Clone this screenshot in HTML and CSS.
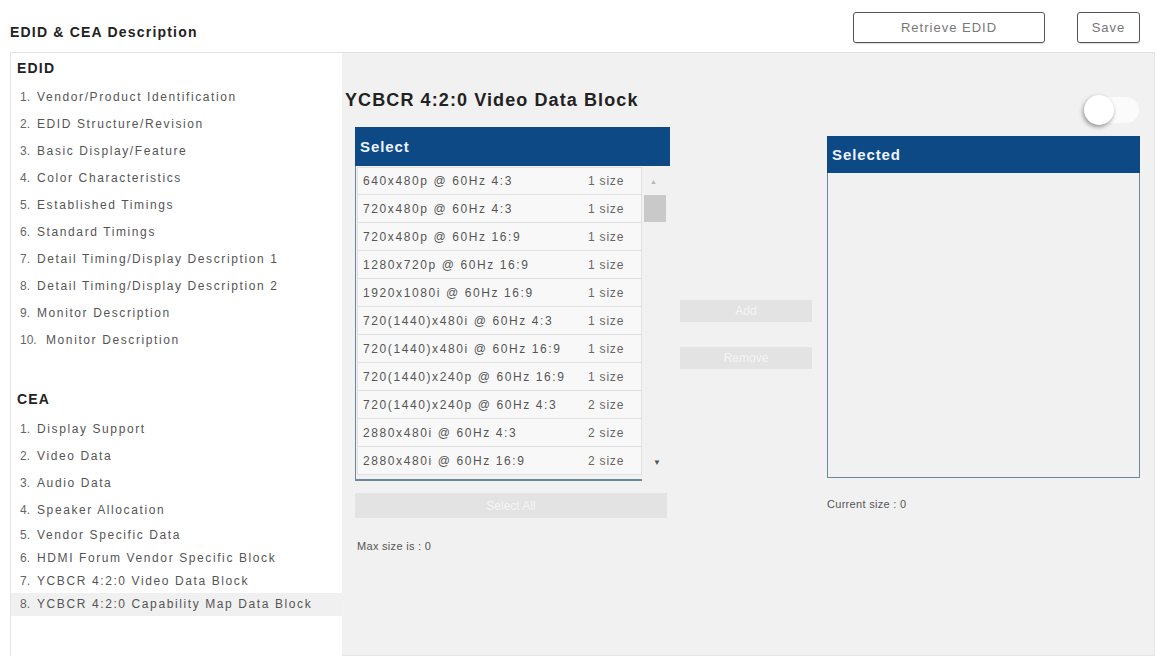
FILE: index.html
```html
<!DOCTYPE html>
<html lang="en">
<head>
  <meta charset="UTF-8" />
  <meta name="viewport" content="width=device-width, initial-scale=1.0"/>
  <title>EDID &amp; CEA Description</title>
  <link rel="stylesheet" href="styles.css">
</head>
<body>
  <div class="topbar">
    <div class="page-title">EDID &amp; CEA Description</div>
    <div class="top-actions">
      <button type="button" class="btn btn-retrieve">Retrieve EDID</button>
      <button type="button" class="btn btn-save">Save</button>
    </div>
  </div>

  <div class="content">
    <!-- block navigation -->
    <div class="sidebar">
      <div class="nav-title">EDID</div>
      <ul class="nav-list">
        <li><span class="num">1.</span>Vendor/Product Identification</li>
        <li><span class="num">2.</span>EDID Structure/Revision</li>
        <li><span class="num">3.</span>Basic Display/Feature</li>
        <li><span class="num">4.</span>Color Characteristics</li>
        <li><span class="num">5.</span>Established Timings</li>
        <li><span class="num">6.</span>Standard Timings</li>
        <li><span class="num">7.</span>Detail Timing/Display Description 1</li>
        <li><span class="num">8.</span>Detail Timing/Display Description 2</li>
        <li><span class="num">9.</span>Monitor Description</li>
        <li><span class="num wide">10.</span>Monitor Description</li>
      </ul>

      <div class="nav-title cea">CEA</div>
      <ul class="nav-list">
        <li><span class="num">1.</span>Display Support</li>
        <li><span class="num">2.</span>Video Data</li>
        <li><span class="num">3.</span>Audio Data</li>
        <li><span class="num">4.</span>Speaker Allocation</li>
        <li class="tight"><span class="num">5.</span>Vendor Specific Data</li>
        <li class="tight"><span class="num">6.</span>HDMI Forum Vendor Specific Block</li>
        <li class="tight"><span class="num">7.</span>YCBCR 4:2:0 Video Data Block</li>
        <li class="tight active"><span class="num">8.</span>YCBCR 4:2:0 Capability Map Data Block</li>
      </ul>
    </div>

    <div class="main">
      <div class="block-head">
        <h2>YCBCR 4:2:0 Video Data Block</h2>
        <div class="toggle"><span class="knob"></span></div>
      </div>

      <div class="picker">
        <div class="col-select">
          <div class="panel-head">Select</div>
          <div class="list-wrap">
            <div class="list">
              <div class="row"><span>640x480p @ 60Hz 4:3</span><span class="size">1 size</span></div>
              <div class="row"><span>720x480p @ 60Hz 4:3</span><span class="size">1 size</span></div>
              <div class="row"><span>720x480p @ 60Hz 16:9</span><span class="size">1 size</span></div>
              <div class="row"><span>1280x720p @ 60Hz 16:9</span><span class="size">1 size</span></div>
              <div class="row"><span>1920x1080i @ 60Hz 16:9</span><span class="size">1 size</span></div>
              <div class="row"><span>720(1440)x480i @ 60Hz 4:3</span><span class="size">1 size</span></div>
              <div class="row"><span>720(1440)x480i @ 60Hz 16:9</span><span class="size">1 size</span></div>
              <div class="row"><span>720(1440)x240p @ 60Hz 16:9</span><span class="size">1 size</span></div>
              <div class="row"><span>720(1440)x240p @ 60Hz 4:3</span><span class="size">2 size</span></div>
              <div class="row"><span>2880x480i @ 60Hz 4:3</span><span class="size">2 size</span></div>
              <div class="row"><span>2880x480i @ 60Hz 16:9</span><span class="size">2 size</span></div>
            </div>
            <div class="scrollbar">
              <span class="arrow up">&#9650;</span>
              <span class="thumb"></span>
              <span class="arrow down">&#9660;</span>
            </div>
          </div>
          <button type="button" class="btn-flat btn-all">Select All</button>
          <div class="note">Max size is : 0</div>
        </div>

        <div class="col-actions">
          <button type="button" class="btn-flat btn-add">Add</button>
          <button type="button" class="btn-flat btn-remove">Remove</button>
        </div>

        <div class="col-selected">
          <div class="panel-head">Selected</div>
          <div class="selected-body"></div>
          <div class="note note-current">Current size : 0</div>
        </div>
      </div>
    </div>
  </div>
</body>
</html>
```

FILE: styles.css
```css
body {
  margin: 0;
  font-family: "Liberation Sans", Arial, sans-serif;
  background: #fff;
  color: #333;
}
.topbar {
  height: 52px;
  display: flex;
  align-items: center;
  justify-content: space-between;
  padding: 0 20px 0 10px;
}
.page-title {
  font-size: 14px;
  font-weight: bold;
  letter-spacing: 1.2px;
  color: #222;
  margin-top: 12px;
}
.top-actions {
  display: flex;
  gap: 32px;
  margin-top: 2px;
}
.btn {
  height: 31px;
  background: #fff;
  border: 1px solid #555;
  border-radius: 3px;
  color: #777;
  font-family: inherit;
  font-size: 13px;
  letter-spacing: 1px;
  box-shadow: 0 1px 1px rgba(0,0,0,0.15);
  cursor: pointer;
}
.btn-retrieve {
  width: 192px;
}
.btn-save {
  width: 63px;
}
.content {
  display: flex;
  height: 603px;
  margin: 0 5px 0 10px;
  border-top: 1px solid #e2e2e2;
}

/* left navigation */
.sidebar {
  width: 331px;
  background: #fff;
  border-left: 1px solid #e4e4e4;
  padding-top: 7px;
}
.nav-title {
  font-size: 14px;
  font-weight: bold;
  letter-spacing: 1.2px;
  color: #222;
  line-height: 16px;
  padding-left: 6px;
  margin-bottom: 8px;
}
.nav-title.cea {
  margin-top: 37px;
  margin-bottom: 9px;
}
.nav-list {
  list-style: none;
  margin: 0;
  padding: 0;
}
.nav-list li {
  font-size: 12px;
  letter-spacing: 1.6px;
  color: #555;
  line-height: 27px;
  height: 27px;
  padding-left: 9px;
  display: flex;
  white-space: nowrap;
}
.nav-list li.tight {
  height: 23px;
  line-height: 23px;
}
.nav-list li.active {
  background: #f0f0f0;
}
.num {
  width: 17px;
  color: #666;
  letter-spacing: 0;
}
.num.wide {
  width: 26px;
}

/* block editor */
.main {
  flex: 1;
  background: #f1f1f1;
  border-right: 1px solid #e6e6e6;
  border-bottom: 1px solid #e6e6e6;
  padding-top: 37px;
}
.block-head {
  display: flex;
  justify-content: space-between;
  align-items: flex-start;
  height: 30px;
  margin: 0 15px 7px 3px;
}
.block-head h2 {
  margin: 0;
  font-size: 18px;
  letter-spacing: 1.1px;
  line-height: 20px;
  color: #222;
}
.toggle {
  position: relative;
  width: 50px;
  height: 26px;
  margin-top: 7px;
  border-radius: 13px;
  background: #fbfbfb;
}
.knob {
  position: absolute;
  left: -5px;
  top: -2px;
  width: 30px;
  height: 30px;
  border-radius: 50%;
  background: #fff;
  box-shadow: -1px 2px 4px rgba(0,0,0,0.4);
}
.picker {
  display: flex;
  padding-left: 13px;
}
.panel-head {
  background: #0d4a85;
  color: #eef3fb;
  font-size: 15px;
  font-weight: bold;
  letter-spacing: 0.9px;
  padding-left: 5px;
}
.col-select {
  width: 315px;
}
.col-select .panel-head {
  height: 39px;
  line-height: 39px;
}
.list-wrap {
  display: flex;
  height: 315px;
}
.list {
  width: 285px;
  border-left: 1px solid #6d879e;
  border-bottom: 2px solid #6d879e;
  padding: 1px 0 3px 1px;
}
.row {
  height: 27px;
  display: flex;
  align-items: center;
  background: #f8f8f8;
  border: 1px solid #e1e1e1;
  border-top: none;
  font-size: 12px;
  letter-spacing: 1.6px;
  color: #555;
  padding: 0 0 0 5px;
  white-space: nowrap;
}
.row span:first-child {
  width: 225px;
}
.row:first-child {
  border-top: 1px solid #e1e1e1;
  height: 26px;
}
.size {
  color: #666;
  letter-spacing: 0.8px;
}
.scrollbar {
  position: relative;
  width: 28px;
}
.arrow {
  position: absolute;
  left: 8px;
  font-size: 7px;
}
.arrow.up {
  top: 12px;
  color: #b8b8b8;
}
.arrow.down {
  top: 292px;
  left: 11px;
  font-size: 8px;
  color: #555;
}
.thumb {
  position: absolute;
  left: 2px;
  top: 29px;
  width: 22px;
  height: 27px;
  background: #c9c9c9;
}
.btn-flat {
  display: block;
  border: none;
  background: #e3e3e3;
  color: #f4f4f4;
  font-family: inherit;
  font-size: 12px;
  cursor: default;
}
.btn-all {
  width: 312px;
  height: 25px;
  margin-top: 12px;
}
.note {
  font-size: 11px;
  letter-spacing: 0.3px;
  color: #555;
  margin: 22px 0 0 2px;
}
.col-actions {
  width: 132px;
  margin-left: 10px;
  padding-top: 173px;
}
.btn-add,
.btn-remove {
  width: 132px;
  height: 22px;
}
.btn-remove {
  margin-top: 25px;
}
.col-selected {
  width: 313px;
  margin: 9px 0 0 15px;
}
.col-selected .panel-head {
  height: 37px;
  line-height: 37px;
}
.selected-body {
  height: 304px;
  border: 1px solid #6d879e;
  border-top: none;
}
.note-current {
  margin: 20px 0 0 0;
}
```
